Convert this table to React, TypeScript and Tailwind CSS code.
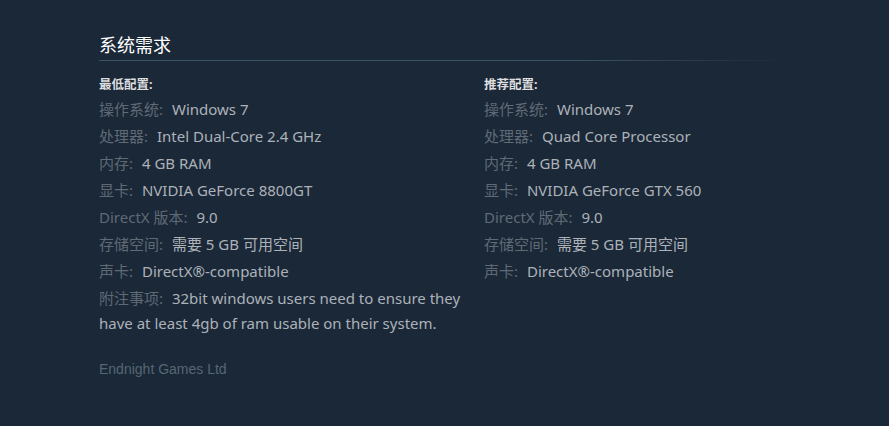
import React from 'react';

type Req = { label: string; value: string };

const minimum: Req[] = [
  { label: '操作系统:', value: 'Windows 7' },
  { label: '处理器:', value: 'Intel Dual-Core 2.4 GHz' },
  { label: '内存:', value: '4 GB RAM' },
  { label: '显卡:', value: 'NVIDIA GeForce 8800GT' },
  { label: 'DirectX 版本:', value: '9.0' },
  { label: '存储空间:', value: '需要 5 GB 可用空间' },
  { label: '声卡:', value: 'DirectX®-compatible' },
  { label: '附注事项:', value: '32bit windows users need to ensure they have at least 4gb of ram usable on their system.' },
];

const recommended: Req[] = [
  { label: '操作系统:', value: 'Windows 7' },
  { label: '处理器:', value: 'Quad Core Processor' },
  { label: '内存:', value: '4 GB RAM' },
  { label: '显卡:', value: 'NVIDIA GeForce GTX 560' },
  { label: 'DirectX 版本:', value: '9.0' },
  { label: '存储空间:', value: '需要 5 GB 可用空间' },
  { label: '声卡:', value: 'DirectX®-compatible' },
];

const font = '[font-family:"Noto_Sans","Noto_Sans_CJK_SC",sans-serif]';

function ReqColumn({ heading, items }: { heading: string; items: Req[] }) {
  return (
    <div className="w-[385px] pr-[14px]">
      <div className="text-[12.5px] leading-[18px] font-bold text-[#dcdedf]">{heading}</div>
      <ul className="mt-[3px] flex flex-col gap-[2px]">
        {items.map((it) => (
          <li key={it.label} className="text-[15px] leading-[25px] text-[#acb2b8]">
            <span className="mr-[5px] text-[#5f6a75]">{it.label}</span> {it.value}
          </li>
        ))}
      </ul>
    </div>
  );
}

export default function App() {
  return (
    <div className={`min-h-[426px] w-full bg-[#1b2838] ${font}`}>
      <div className="pl-[99px] pt-[32px]">
        <h2 className="text-[18px] leading-[26px] font-normal text-white">系统需求</h2>
        <div className="mt-[2px] h-px w-[690px] bg-gradient-to-r from-[#3c5266] via-[#3c5266] via-70% to-transparent" />
        <div className="mt-[15px] flex">
          <ReqColumn heading="最低配置:" items={minimum} />
          <ReqColumn heading="推荐配置:" items={recommended} />
        </div>
        <div className="mt-[24px] text-[14px] leading-[18px] text-[#556772] [font-family:'Liberation_Sans',Arial,sans-serif]">
          Endnight Games Ltd
        </div>
      </div>
    </div>
  );
}
